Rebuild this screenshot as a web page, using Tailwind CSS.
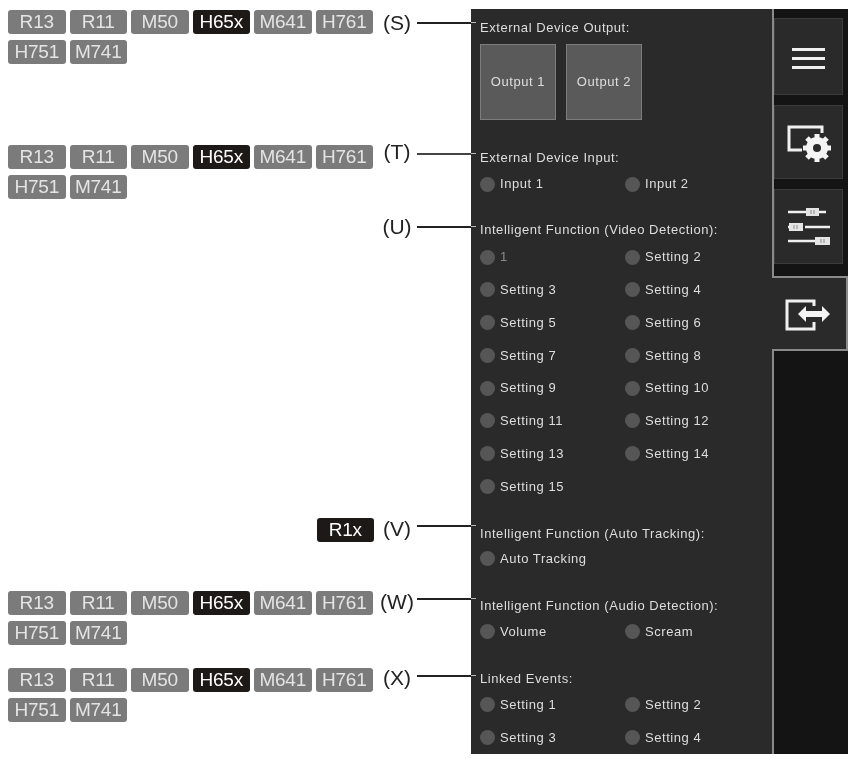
<!DOCTYPE html>
<html lang="en">
<head>
<meta charset="UTF-8">
<title>External device settings</title>
<script src="https://cdn.jsdelivr.net/npm/@tailwindcss/browser@4"></script>
</head>
<body class="bg-white w-[851px] h-[759px] overflow-hidden font-['Liberation_Sans',sans-serif]">
<div class="flex h-[759px] pt-[9px] blur-[0.4px]">

  <!-- left: model chips + callouts -->
  <div class="w-[471px] shrink-0 text-[#e4e4e4] text-[19px] tracking-[-0.2px]">
    <div class="flex h-[135px]">
      <div class="w-[375px] pl-[8px] pt-[1px] flex flex-wrap content-start gap-x-[4px] gap-y-[6px]">
        <span class="w-[57.5px] h-[24px] rounded-[3px] bg-[#7b7b7b] flex items-center justify-center">R13</span>
        <span class="w-[57.5px] h-[24px] rounded-[3px] bg-[#7b7b7b] flex items-center justify-center">R11</span>
        <span class="w-[57.5px] h-[24px] rounded-[3px] bg-[#7b7b7b] flex items-center justify-center">M50</span>
        <span class="w-[57.5px] h-[24px] rounded-[3px] bg-[#1c1917] text-white flex items-center justify-center">H65x</span>
        <span class="w-[57.5px] h-[24px] rounded-[3px] bg-[#7b7b7b] flex items-center justify-center">M641</span>
        <span class="w-[57.5px] h-[24px] rounded-[3px] bg-[#7b7b7b] flex items-center justify-center">H761</span>
        <span class="w-[57.5px] h-[24px] rounded-[3px] bg-[#7b7b7b] flex items-center justify-center">H751</span>
        <span class="w-[57.5px] h-[24px] rounded-[3px] bg-[#7b7b7b] flex items-center justify-center">M741</span>
      </div>
      <div class="flex items-start flex-1 text-[#222] text-[21px] tracking-normal">
        <span class="w-[42px] pl-[2px] text-center leading-[22px] mt-[3px]">(S)</span>
        <span class="relative h-[2px] w-[54px] bg-[#222] mt-[13px]"><i class="absolute left-full top-0 w-[5px] h-[1px] bg-[#bbb]"></i></span>
      </div>
    </div>
    <div class="flex h-[73px]">
      <div class="w-[375px] pl-[8px] pt-[1px] flex flex-wrap content-start gap-x-[4px] gap-y-[6px]">
        <span class="w-[57.5px] h-[24px] rounded-[3px] bg-[#7b7b7b] flex items-center justify-center">R13</span>
        <span class="w-[57.5px] h-[24px] rounded-[3px] bg-[#7b7b7b] flex items-center justify-center">R11</span>
        <span class="w-[57.5px] h-[24px] rounded-[3px] bg-[#7b7b7b] flex items-center justify-center">M50</span>
        <span class="w-[57.5px] h-[24px] rounded-[3px] bg-[#1c1917] text-white flex items-center justify-center">H65x</span>
        <span class="w-[57.5px] h-[24px] rounded-[3px] bg-[#7b7b7b] flex items-center justify-center">M641</span>
        <span class="w-[57.5px] h-[24px] rounded-[3px] bg-[#7b7b7b] flex items-center justify-center">H761</span>
        <span class="w-[57.5px] h-[24px] rounded-[3px] bg-[#7b7b7b] flex items-center justify-center">H751</span>
        <span class="w-[57.5px] h-[24px] rounded-[3px] bg-[#7b7b7b] flex items-center justify-center">M741</span>
      </div>
      <div class="flex items-start flex-1 text-[#222] text-[21px] tracking-normal">
        <span class="w-[42px] pl-[2px] text-center leading-[22px] -mt-[3px]">(T)</span>
        <span class="relative h-[2px] w-[54px] bg-[#444] mt-[9px]"><i class="absolute left-full top-0 w-[5px] h-[1px] bg-[#bbb]"></i></span>
      </div>
    </div>
    <div class="flex h-[301px]">
      <div class="w-[375px]"></div>
      <div class="flex items-start flex-1 text-[#222] text-[21px] tracking-normal">
        <span class="w-[42px] pl-[2px] text-center leading-[22px] -mt-[1px]">(U)</span>
        <span class="relative h-[2px] w-[54px] bg-[#222] mt-[9px]"><i class="absolute left-full top-0 w-[5px] h-[1px] bg-[#bbb]"></i></span>
      </div>
    </div>
    <div class="flex h-[72px]">
      <div class="w-[375px] pr-[1px] flex justify-end">
        <span class="w-[57.5px] h-[24px] rounded-[3px] bg-[#1c1917] text-white flex items-center justify-center">R1x</span>
      </div>
      <div class="flex items-start flex-1 text-[#222] text-[21px] tracking-normal">
        <span class="w-[42px] pl-[2px] text-center leading-[22px]">(V)</span>
        <span class="relative h-[2px] w-[54px] bg-[#222] mt-[7px]"><i class="absolute left-full top-0 w-[5px] h-[1px] bg-[#bbb]"></i></span>
      </div>
    </div>
    <div class="flex h-[77px]">
      <div class="w-[375px] pl-[8px] pt-[1px] flex flex-wrap content-start gap-x-[4px] gap-y-[6px]">
        <span class="w-[57.5px] h-[24px] rounded-[3px] bg-[#7b7b7b] flex items-center justify-center">R13</span>
        <span class="w-[57.5px] h-[24px] rounded-[3px] bg-[#7b7b7b] flex items-center justify-center">R11</span>
        <span class="w-[57.5px] h-[24px] rounded-[3px] bg-[#7b7b7b] flex items-center justify-center">M50</span>
        <span class="w-[57.5px] h-[24px] rounded-[3px] bg-[#1c1917] text-white flex items-center justify-center">H65x</span>
        <span class="w-[57.5px] h-[24px] rounded-[3px] bg-[#7b7b7b] flex items-center justify-center">M641</span>
        <span class="w-[57.5px] h-[24px] rounded-[3px] bg-[#7b7b7b] flex items-center justify-center">H761</span>
        <span class="w-[57.5px] h-[24px] rounded-[3px] bg-[#7b7b7b] flex items-center justify-center">H751</span>
        <span class="w-[57.5px] h-[24px] rounded-[3px] bg-[#7b7b7b] flex items-center justify-center">M741</span>
      </div>
      <div class="flex items-start flex-1 text-[#222] text-[21px] tracking-normal">
        <span class="w-[42px] pl-[2px] text-center leading-[22px] mt-[1px]">(W)</span>
        <span class="relative h-[2px] w-[54px] bg-[#222] mt-[8px]"><i class="absolute left-full top-0 w-[5px] h-[1px] bg-[#bbb]"></i></span>
      </div>
    </div>
    <div class="flex">
      <div class="w-[375px] pl-[8px] pt-[1px] flex flex-wrap content-start gap-x-[4px] gap-y-[6px]">
        <span class="w-[57.5px] h-[24px] rounded-[3px] bg-[#7b7b7b] flex items-center justify-center">R13</span>
        <span class="w-[57.5px] h-[24px] rounded-[3px] bg-[#7b7b7b] flex items-center justify-center">R11</span>
        <span class="w-[57.5px] h-[24px] rounded-[3px] bg-[#7b7b7b] flex items-center justify-center">M50</span>
        <span class="w-[57.5px] h-[24px] rounded-[3px] bg-[#1c1917] text-white flex items-center justify-center">H65x</span>
        <span class="w-[57.5px] h-[24px] rounded-[3px] bg-[#7b7b7b] flex items-center justify-center">M641</span>
        <span class="w-[57.5px] h-[24px] rounded-[3px] bg-[#7b7b7b] flex items-center justify-center">H761</span>
        <span class="w-[57.5px] h-[24px] rounded-[3px] bg-[#7b7b7b] flex items-center justify-center">H751</span>
        <span class="w-[57.5px] h-[24px] rounded-[3px] bg-[#7b7b7b] flex items-center justify-center">M741</span>
      </div>
      <div class="flex items-start flex-1 text-[#222] text-[21px] tracking-normal">
        <span class="w-[42px] pl-[2px] text-center leading-[22px]">(X)</span>
        <span class="relative h-[2px] w-[54px] bg-[#222] mt-[8px]"><i class="absolute left-full top-0 w-[5px] h-[1px] bg-[#bbb]"></i></span>
      </div>
    </div>
  </div>

  <!-- dark panel -->
  <div class="w-[377px] h-[745px] bg-[#2a2a2a] flex text-[#dedede] text-[13px] tracking-[0.55px]">
    <div class="w-[301px] pl-[9px] pt-[10px]">
      <div class="leading-[18px]">External Device Output:</div>
      <div class="flex gap-[10px] mt-[7px]">
        <button class="w-[76px] h-[76px] bg-[#5a5a5a] border border-[#7d7d7d] text-[#dedede]">Output 1</button>
        <button class="w-[76px] h-[76px] bg-[#5a5a5a] border border-[#7d7d7d] text-[#dedede]">Output 2</button>
      </div>

      <div class="leading-[18px] mt-[29px]">External Device Input:</div>
      <div class="grid grid-cols-[145px_145px] mt-[8px]">
        <div class="flex items-center gap-[5px] h-[18px]"><span class="w-[15px] h-[15px] rounded-full bg-[#565656]"></span>Input 1</div>
        <div class="flex items-center gap-[5px] h-[18px]"><span class="w-[15px] h-[15px] rounded-full bg-[#565656]"></span>Input 2</div>
      </div>

      <div class="leading-[18px] mt-[28px] whitespace-nowrap">Intelligent Function (Video Detection):</div>
      <div class="grid grid-cols-[145px_145px] auto-rows-[18px] gap-y-[14.8px] mt-[9px]">
        <div class="flex items-center gap-[5px] text-[#8a8a8a]"><span class="w-[15px] h-[15px] rounded-full bg-[#565656]"></span>1</div>
        <div class="flex items-center gap-[5px]"><span class="w-[15px] h-[15px] rounded-full bg-[#565656]"></span>Setting 2</div>
        <div class="flex items-center gap-[5px]"><span class="w-[15px] h-[15px] rounded-full bg-[#565656]"></span>Setting 3</div>
        <div class="flex items-center gap-[5px]"><span class="w-[15px] h-[15px] rounded-full bg-[#565656]"></span>Setting 4</div>
        <div class="flex items-center gap-[5px]"><span class="w-[15px] h-[15px] rounded-full bg-[#565656]"></span>Setting 5</div>
        <div class="flex items-center gap-[5px]"><span class="w-[15px] h-[15px] rounded-full bg-[#565656]"></span>Setting 6</div>
        <div class="flex items-center gap-[5px]"><span class="w-[15px] h-[15px] rounded-full bg-[#565656]"></span>Setting 7</div>
        <div class="flex items-center gap-[5px]"><span class="w-[15px] h-[15px] rounded-full bg-[#565656]"></span>Setting 8</div>
        <div class="flex items-center gap-[5px]"><span class="w-[15px] h-[15px] rounded-full bg-[#565656]"></span>Setting 9</div>
        <div class="flex items-center gap-[5px]"><span class="w-[15px] h-[15px] rounded-full bg-[#565656]"></span>Setting 10</div>
        <div class="flex items-center gap-[5px]"><span class="w-[15px] h-[15px] rounded-full bg-[#565656]"></span>Setting 11</div>
        <div class="flex items-center gap-[5px]"><span class="w-[15px] h-[15px] rounded-full bg-[#565656]"></span>Setting 12</div>
        <div class="flex items-center gap-[5px]"><span class="w-[15px] h-[15px] rounded-full bg-[#565656]"></span>Setting 13</div>
        <div class="flex items-center gap-[5px]"><span class="w-[15px] h-[15px] rounded-full bg-[#565656]"></span>Setting 14</div>
        <div class="flex items-center gap-[5px]"><span class="w-[15px] h-[15px] rounded-full bg-[#565656]"></span>Setting 15</div>
      </div>

      <div class="leading-[18px] mt-[29px] whitespace-nowrap">Intelligent Function (Auto Tracking):</div>
      <div class="flex items-center gap-[5px] h-[18px] mt-[7px]"><span class="w-[15px] h-[15px] rounded-full bg-[#565656]"></span>Auto Tracking</div>

      <div class="leading-[18px] mt-[29px] whitespace-nowrap">Intelligent Function (Audio Detection):</div>
      <div class="grid grid-cols-[145px_145px] mt-[8px]">
        <div class="flex items-center gap-[5px] h-[18px]"><span class="w-[15px] h-[15px] rounded-full bg-[#565656]"></span>Volume</div>
        <div class="flex items-center gap-[5px] h-[18px]"><span class="w-[15px] h-[15px] rounded-full bg-[#565656]"></span>Scream</div>
      </div>

      <div class="leading-[18px] mt-[29px]">Linked Events:</div>
      <div class="grid grid-cols-[145px_145px] auto-rows-[18px] gap-y-[15px] mt-[8px]">
        <div class="flex items-center gap-[5px]"><span class="w-[15px] h-[15px] rounded-full bg-[#565656]"></span>Setting 1</div>
        <div class="flex items-center gap-[5px]"><span class="w-[15px] h-[15px] rounded-full bg-[#565656]"></span>Setting 2</div>
        <div class="flex items-center gap-[5px]"><span class="w-[15px] h-[15px] rounded-full bg-[#565656]"></span>Setting 3</div>
        <div class="flex items-center gap-[5px]"><span class="w-[15px] h-[15px] rounded-full bg-[#565656]"></span>Setting 4</div>
      </div>
    </div>

    <!-- tab strip -->
    <div class="w-[76px] flex flex-col bg-[#141414]">
      <div class="h-[267px] border-l-2 border-[#8a8a8a] pt-[9px] pr-[5px] flex flex-col gap-[10px]">
        <div class="h-[77px] bg-[#2a2a2a] border border-[#3c3c3c] flex items-center justify-center">
          <svg class="mt-[3px]" width="33" height="21" viewBox="0 0 33 21" fill="none" stroke="#f0f0f0" stroke-width="3"><path d="M0 1.5h33M0 10.5h33M0 19.5h33"/></svg>
        </div>
        <div class="h-[74px] bg-[#2a2a2a] border border-[#3c3c3c] flex items-center justify-center">
          <svg class="mt-[3px]" width="44" height="37" viewBox="0 0 44 37"><path d="M35 8V2H2v23h13" fill="none" stroke="#f0f0f0" stroke-width="3"/><path d="M30 9v28M16 23h28M20 13l20 20M40 13l-20 20" stroke="#f4f4f4" stroke-width="5"/><circle cx="30" cy="23" r="11" fill="#f4f4f4"/><circle cx="30" cy="23" r="4" fill="#2a2a2a"/></svg>
        </div>
        <div class="h-[75px] bg-[#2a2a2a] border border-[#3c3c3c] flex items-center justify-center">
          <svg width="42" height="37" viewBox="0 0 42 37" fill="none" stroke="#f0f0f0" stroke-width="2.5"><path d="M0 4h18M31 4h7M0 19h3M17 19h25M0 33h27"/><g fill="#e4e4e4" stroke="none"><rect x="18" y="0" width="13" height="8"/><rect x="1" y="15" width="14" height="8"/><rect x="27" y="29" width="15" height="8"/></g><path d="M23 2v4M26 2v4M6 17v4M9 17v4M33 31v4M36 31v4" stroke="#8a8a8a" stroke-width="1"/></svg>
        </div>
      </div>
      <div class="h-[75px] bg-[#2a2a2a] border-r-2 border-y-2 border-[#8a8a8a] pr-[3px] flex items-center justify-center">
        <svg class="mt-[2px]" width="46" height="32" viewBox="0 0 46 32" fill="none"><path d="M29 7V2H2v28h27v-7" stroke="#f0f0f0" stroke-width="3"/><path d="M13 15l8-8v5h16V7l8 8-8 8v-5H21v5z" fill="#f4f4f4"/></svg>
      </div>
      <div class="flex-1 border-l-2 border-[#8a8a8a]"></div>
    </div>
  </div>
</div>
</body>
</html>
